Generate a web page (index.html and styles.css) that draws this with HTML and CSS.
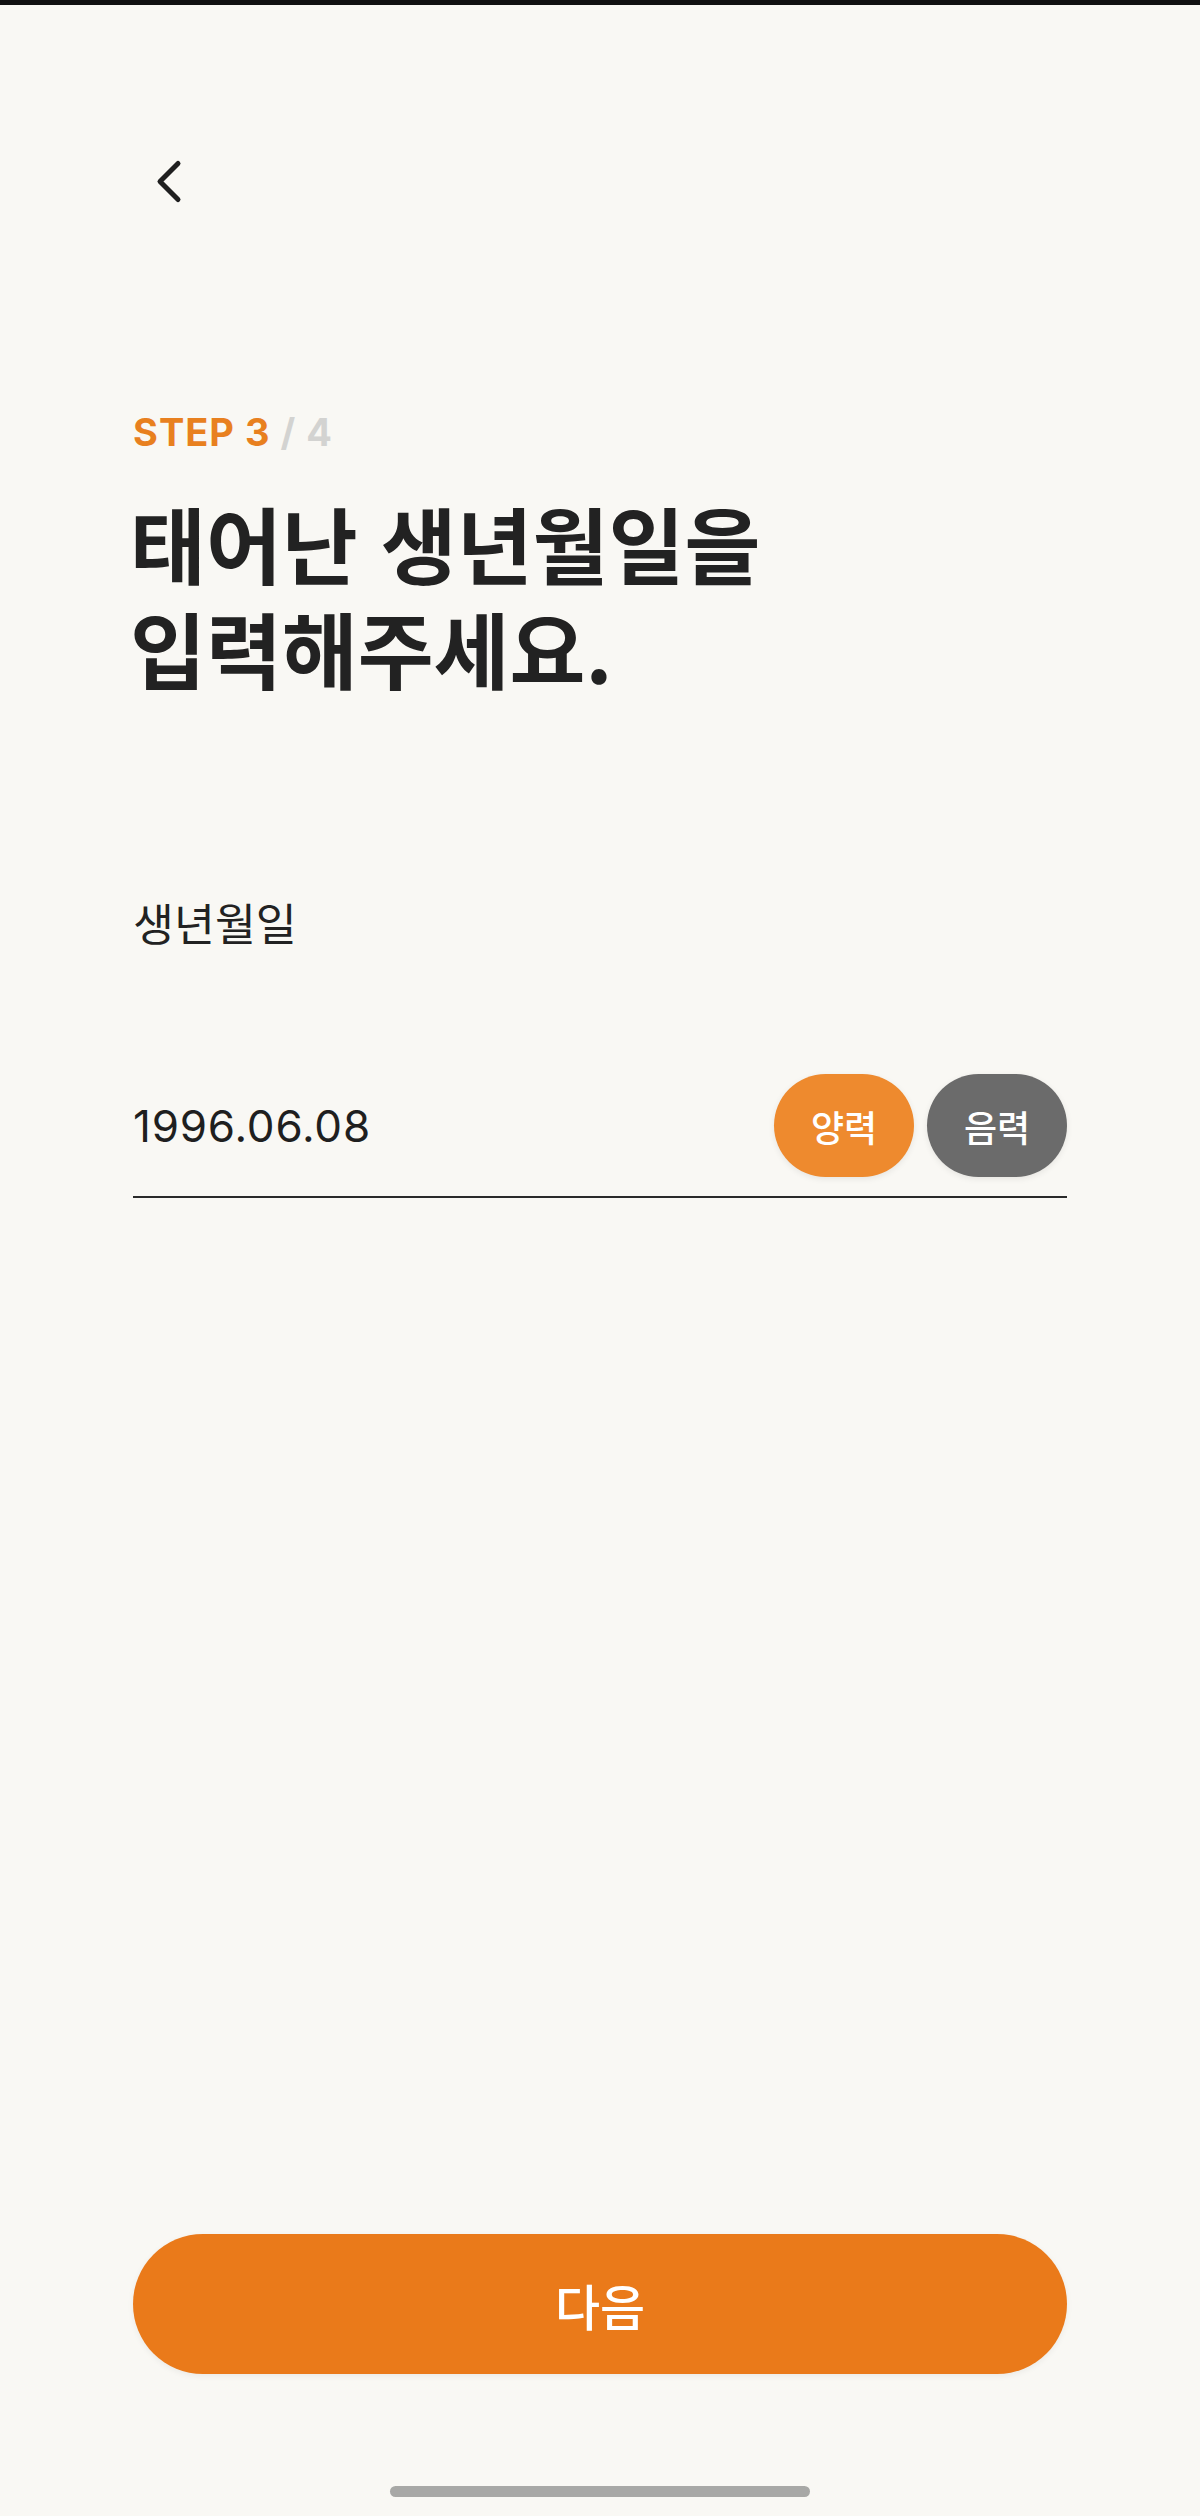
FILE: index.html
```html
<!DOCTYPE html>
<html lang="ko">
<head>
<meta charset="utf-8">
<title>생년월일 입력</title>
<link rel="stylesheet" href="styles.css">
</head>
<body>
<div class="screen">
  <div class="statusbar"></div>
  <header class="nav">
    <button class="back" aria-label="뒤로">
      <svg width="30" height="48" viewBox="0 0 30 48"><path d="M24 6.5 L6 24.5 L24 42.5" fill="none" stroke="#1f1f1f" stroke-width="5" stroke-linecap="round" stroke-linejoin="round"/></svg>
    </button>
  </header>
  <main class="content">
    <p class="step"><span class="step-cur">STEP 3</span> <span class="step-total">/ 4</span></p>
    <h1 class="title">태어난 생년월일을<br>입력해주세요.</h1>
    <label class="field-label">생년월일</label>
    <div class="field">
      <span class="field-value">1996.06.08</span>
      <div class="toggle">
        <button class="pill pill-active">양력</button>
        <button class="pill pill-inactive">음력</button>
      </div>
    </div>
  </main>
  <footer class="bottom">
    <button class="next">다음</button>
    <div class="home-indicator"></div>
  </footer>
</div>
</body>
</html>
```
FILE: styles.css
```css
* { box-sizing: border-box; }
html, body { margin: 0; padding: 0; }
body {
  background: #f9f8f4;
  font-family: Inter, "Noto Sans CJK KR", sans-serif;
  color: #1f1f1f;
}
.screen {
  width: 1200px;
  height: 2516px;
  display: flex;
  flex-direction: column;
  background: #f9f8f4;
}
.statusbar { height: 5px; background: #111; flex: none; }
.nav { height: 200px; padding: 152px 0 0 154px; flex: none; }
.back { border: 0; background: none; padding: 0; display: block; }
.back svg { display: block; }
.content { flex: 1; padding: 0 133px; display: flex; flex-direction: column; }
.step {
  margin: 208px 0 0;
  font-size: 38px;
  line-height: 38px;
  font-weight: 700;
  letter-spacing: 1px;
}
.step-cur { color: #e8801f; }
.step-total { color: #d3d3d1; }
.title {
  margin: 39px 0 0 -3px;
  font-family: "Noto Sans CJK KR", sans-serif;
  font-size: 82.5px;
  line-height: 105px;
  font-weight: 700;
  color: #222;
}
.field-label {
  margin-top: 197px;
  font-family: "Noto Sans CJK KR", sans-serif;
  font-size: 44.5px;
  line-height: 50px;
  color: #222;
}
.field {
  margin-top: 127px;
  display: flex;
  align-items: center;
  justify-content: space-between;
  border-bottom: 2px solid #2a2a2a;
  padding-bottom: 19px;
}
.field-value { font-size: 44px; letter-spacing: 0.8px; color: #1f1f1f; }
.toggle { display: flex; gap: 13px; }
.pill {
  width: 140px;
  height: 103px;
  border: 0;
  border-radius: 52px;
  color: #fff;
  font-family: "Noto Sans CJK KR", sans-serif;
  font-size: 36px;
  font-weight: 500;
  padding: 0;
  box-shadow: 0 2px 6px rgba(0,0,0,0.08);
}
.pill-active { background: #ee8a2e; }
.pill-inactive { background: #6b6b6b; }
.bottom { flex: none; padding: 0 133px; display: flex; flex-direction: column; align-items: center; }
.next {
  width: 100%;
  height: 140px;
  border: 0;
  border-radius: 70px;
  background: #ea7a1a;
  color: #fff;
  font-family: "Noto Sans CJK KR", sans-serif;
  font-size: 49px;
  font-weight: 500;
  box-shadow: 0 2px 6px rgba(0,0,0,0.06);
}
.home-indicator { width: 420px; height: 11px; border-radius: 6px; background: #a8a8a6; margin: 112px 0 19px; }
```
